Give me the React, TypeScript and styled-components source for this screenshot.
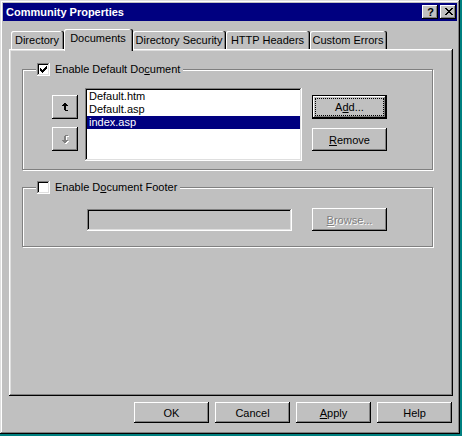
import React from 'react';
import styled, { createGlobalStyle, css } from 'styled-components';

const GlobalStyle = createGlobalStyle`
  html, body {
    margin: 0;
    padding: 0;
  }
  body {
    background: #008080;
    font-family: "Liberation Sans", Arial, sans-serif;
    font-size: 11px;
    color: #000;
  }
  *, *::before, *::after {
    box-sizing: border-box;
  }
`;

const raised = css`
  box-shadow: inset -1px -1px #000, inset 1px 1px #fff, inset -2px -2px #808080, inset 2px 2px #c0c0c0;
`;

const defaultRaised = css`
  box-shadow: inset -1px -1px #000, inset 1px 1px #000, inset -2px -2px #000, inset 2px 2px #fff,
    inset -3px -3px #808080, inset 3px 3px #c0c0c0;
`;

const sunken = css`
  box-shadow: inset -1px -1px #fff, inset 1px 1px #808080, inset -2px -2px #dfdfdf, inset 2px 2px #000;
`;

const Window = styled.div`
  width: 460px;
  height: 434px;
  padding: 3px;
  background: #c0c0c0;
  box-shadow: inset -1px -1px #000, inset 1px 1px #dfdfdf, inset -2px -2px #808080, inset 2px 2px #fff;
  display: flex;
  flex-direction: column;
`;

const TitleBar = styled.div`
  height: 18px;
  background: #000080;
  color: #fff;
  display: flex;
  align-items: center;
  padding: 0 1px 0 3px;
`;

const TitleText = styled.span`
  flex: 1;
  font-weight: bold;
  font-size: 11px;
`;

const TitleButton = styled.button`
  width: 16px;
  height: 14px;
  margin: 0;
  padding: 0 0 1px 1px;
  border: 0;
  background: #c0c0c0;
  color: #000;
  font: bold 11px "Liberation Sans", Arial, sans-serif;
  display: flex;
  align-items: center;
  justify-content: center;
  ${raised}

  & + & {
    margin-left: 2px;
  }
`;

const Body = styled.div`
  padding: 8px 4px 0 6px;
  display: flex;
  flex-direction: column;
`;

const TabStrip = styled.div`
  height: 20px;
  padding-left: 2px;
  display: flex;
  align-items: flex-end;
`;

const Tab = styled.div<{ $active?: boolean; $w: number }>`
  width: ${p => p.$w}px;
  height: ${p => (p.$active ? 22 : 18)}px;
  margin-bottom: ${p => (p.$active ? -2 : 0)}px;
  position: relative;
  z-index: ${p => (p.$active ? 1 : 0)};
  background: #c0c0c0;
  border-radius: 2px 2px 0 0;
  box-shadow: inset -1px 0 #000, inset -2px 0 #808080, inset 1px 1px #fff;
  line-height: 18px;
  text-align: center;
  padding-right: 1px;
  white-space: nowrap;
`;

const Panel = styled.div`
  height: 347px;
  padding: 20px 0 0 13px;
  background: #c0c0c0;
  box-shadow: inset -1px -1px #000, inset 1px 1px #fff, inset -2px -2px #808080, inset 2px 2px #dfdfdf;
  display: flex;
  flex-direction: column;
`;

const Group = styled.section<{ $gap?: number }>`
  width: 411px;
  margin-top: ${p => p.$gap ?? 0}px;
  border: 1px solid #808080;
  box-shadow: inset 1px 1px #fff, 1px 1px #fff;
  display: flex;
  flex-direction: column;
`;

const Legend = styled.label`
  align-self: flex-start;
  height: 13px;
  margin: -7px 0 0 13px;
  padding: 0 3px 0 1px;
  background: #c0c0c0;
  display: flex;
  align-items: center;
  gap: 5px;
  line-height: 13px;
  white-space: nowrap;
`;

const CheckBox = styled.span`
  width: 13px;
  height: 13px;
  background: #fff;
  display: flex;
  align-items: center;
  justify-content: center;
  ${sunken}
`;

const GroupBody = styled.div<{ $pad: string }>`
  padding: ${p => p.$pad};
  display: flex;
`;

const ArrowColumn = styled.div`
  margin-top: 7px;
  display: flex;
  flex-direction: column;
  gap: 8px;
`;

const ListBox = styled.div`
  width: 217px;
  height: 73px;
  margin-left: 7px;
  padding: 2px;
  background: #fff;
  ${sunken}
`;

const ListItem = styled.div<{ $selected?: boolean }>`
  height: 13px;
  line-height: 13px;
  padding-left: 2px;
  background: ${p => (p.$selected ? '#000080' : 'transparent')};
  color: ${p => (p.$selected ? '#fff' : '#000')};
`;

const ButtonColumn = styled.div`
  margin: 7px 0 0 10px;
  display: flex;
  flex-direction: column;
  gap: 9px;
`;

const FooterRow = styled.div`
  display: flex;
  align-items: flex-end;
  gap: 20px;
`;

const TextField = styled.div`
  width: 205px;
  height: 22px;
  background: #c0c0c0;
  ${sunken}
`;

const Button = styled.button<{ $default?: boolean; $w?: number; $h?: number }>`
  width: ${p => p.$w ?? 75}px;
  height: ${p => p.$h ?? 23}px;
  margin: 0;
  padding: 3px;
  border: 0;
  background: #c0c0c0;
  font: 11px "Liberation Sans", Arial, sans-serif;
  color: ${p => (p.disabled ? '#808080' : '#000')};
  text-shadow: ${p => (p.disabled ? '1px 1px 0 #fff' : 'none')};
  display: flex;
  ${p => (p.$default ? defaultRaised : raised)}
`;

const ButtonFace = styled.span<{ $focus?: boolean }>`
  flex: 1;
  display: flex;
  align-items: center;
  justify-content: center;
  border: 1px dotted ${p => (p.$focus ? '#000' : 'transparent')};
  white-space: nowrap;
`;

const DialogButtons = styled.div`
  margin-top: 6px;
  padding-right: 1px;
  display: flex;
  justify-content: flex-end;
  gap: 6px;
`;

const Key = styled.u`
  text-decoration: underline;
`;

type PixelProps = { rows: string[]; color?: string; shadow?: string };

const Pixels = ({ rows, color = '#000', shadow }: PixelProps) => {
  const cells: [number, number][] = [];
  rows.forEach((r, y) => r.split('').forEach((c, x) => c === '#' && cells.push([x, y])));
  const extra = shadow ? 1 : 0;
  const draw = (fill: string, d: number) =>
    cells.map(([x, y]) => (
      <rect key={`${fill}-${x}-${y}`} x={x + d} y={y + d} width={1} height={1} fill={fill} />
    ));
  return (
    <svg
      width={rows[0].length + extra}
      height={rows.length + extra}
      shapeRendering="crispEdges"
      style={{ display: 'block' }}
    >
      {shadow && draw(shadow, 1)}
      {draw(color, 0)}
    </svg>
  );
};

const CHECK = ['......#', '.....##', '#...###', '##.###.', '#####..', '.###...', '..#....'];
const CLOSE = ['##....##', '.##..##.', '..####..', '...##...', '..####..', '.##..##.', '##....##'];
const UP = ['..##..', '.####.', '######', '..##..', '..##..', '..##..', '..##..', '...###'];
const DOWN = [...UP].reverse();

const Check = ({ on }: { on: boolean }) => (
  <CheckBox>{on && <Pixels rows={CHECK} />}</CheckBox>
);

const tabs = [
  { label: 'Directory', w: 53 },
  { label: 'Documents', w: 69, active: true },
  { label: 'Directory Security', w: 93 },
  { label: 'HTTP Headers', w: 84 },
  { label: 'Custom Errors', w: 77 },
];

const docs = ['Default.htm', 'Default.asp', 'index.asp'];

export default function App() {
  return (
    <>
      <GlobalStyle />
      <Window>
        <TitleBar>
          <TitleText>Community Properties</TitleText>
          <TitleButton>?</TitleButton>
          <TitleButton>
            <Pixels rows={CLOSE} />
          </TitleButton>
        </TitleBar>

        <Body>
          <TabStrip>
            {tabs.map(t => (
              <Tab key={t.label} $w={t.w} $active={t.active}>
                {t.label}
              </Tab>
            ))}
          </TabStrip>

          <Panel>
            <Group>
              <Legend>
                <Check on />
                <span>
                  Enable Default Do<Key>c</Key>ument
                </span>
              </Legend>
              <GroupBody $pad="12px 0 8px 29px">
                <ArrowColumn>
                  <Button $w={26} $h={24}>
                    <ButtonFace>
                      <Pixels rows={UP} />
                    </ButtonFace>
                  </Button>
                  <Button $w={26} $h={24} disabled>
                    <ButtonFace>
                      <Pixels rows={DOWN} color="#808080" shadow="#fff" />
                    </ButtonFace>
                  </Button>
                </ArrowColumn>
                <ListBox>
                  {docs.map(d => (
                    <ListItem key={d} $selected={d === 'index.asp'}>
                      {d}
                    </ListItem>
                  ))}
                </ListBox>
                <ButtonColumn>
                  <Button $default $h={24}>
                    <ButtonFace $focus>
                      <span>
                        A<Key>d</Key>d...
                      </span>
                    </ButtonFace>
                  </Button>
                  <Button>
                    <ButtonFace>
                      <span>
                        <Key>R</Key>emove
                      </span>
                    </ButtonFace>
                  </Button>
                </ButtonColumn>
              </GroupBody>
            </Group>

            <Group $gap={17}>
              <Legend>
                <Check on={false} />
                <span>
                  Enable D<Key>o</Key>cument Footer
                </span>
              </Legend>
              <GroupBody $pad="14px 0 15px 64px">
                <FooterRow>
                  <TextField />
                  <Button disabled>
                    <ButtonFace>
                      <span>
                        <Key>B</Key>rowse...
                      </span>
                    </ButtonFace>
                  </Button>
                </FooterRow>
              </GroupBody>
            </Group>
          </Panel>

          <DialogButtons>
            <Button $h={21}>
              <ButtonFace>OK</ButtonFace>
            </Button>
            <Button $h={21}>
              <ButtonFace>Cancel</ButtonFace>
            </Button>
            <Button $h={21}>
              <ButtonFace>
                <span>
                  <Key>A</Key>pply
                </span>
              </ButtonFace>
            </Button>
            <Button $h={21}>
              <ButtonFace>Help</ButtonFace>
            </Button>
          </DialogButtons>
        </Body>
      </Window>
    </>
  );
}
